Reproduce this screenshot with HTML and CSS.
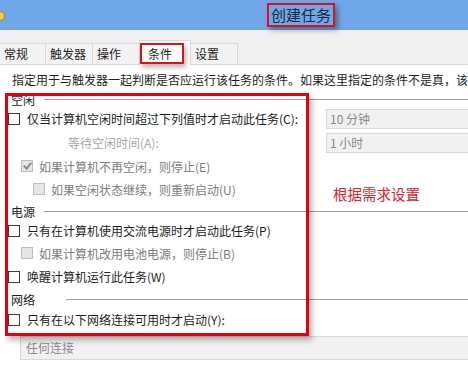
FILE: index.html
```html
<!DOCTYPE HTML>
<html lang="zh-CN">
<head>
	<meta charset="utf-8">
	<title>创建任务</title>
	<link rel="stylesheet" href="styles.css">
</head>
<body>
	<div class="titlebar">
		<svg class="app-icon" width="5" height="10" viewBox="0 0 5 10"><circle cx="0" cy="5" r="4.5" fill="#f2c94c" stroke="#b9892a" stroke-width="1"/></svg>
		<span class="title">创建任务</span>
	</div>
	<div class="tabs">
		<div class="tab tab-first">常规</div>
		<div class="tab tab-wide">触发器</div>
		<div class="tab">操作</div>
		<div class="tab tab-on"><span class="tab-mark">条件</span></div>
		<div class="tab">设置</div>
	</div>
	<div class="page">
		<p class="intro">指定用于与触发器一起判断是否应运行该任务的条件。如果这里指定的条件不是真，该</p>

		<div class="group-head"><span>空闲</span></div>
		<div class="row h21">
			<label class="check"><i class="box"></i>仅当计算机空闲时间超过下列值时才启动此任务(C):</label>
			<div class="select">10 分钟</div>
		</div>
		<div class="row h27">
			<span class="label-off indent-wait">等待空闲时间(A):</span>
			<div class="select">1 小时</div>
		</div>
		<div class="row h20 lvl1">
			<label class="check off"><i class="box box-checked"></i>如果计算机不再空闲，则停止(E)</label>
		</div>
		<div class="row h26 lvl2">
			<label class="check off"><i class="box"></i>如果空闲状态继续，则重新启动(U)</label>
		</div>

		<div class="group-head"><span>电源</span></div>
		<div class="row h21">
			<label class="check"><i class="box"></i>只有在计算机使用交流电源时才启动此任务(P)</label>
		</div>
		<div class="row h24 lvl1">
			<label class="check off"><i class="box"></i>如果计算机改用电池电源，则停止(B)</label>
		</div>
		<div class="row h23">
			<label class="check"><i class="box"></i>唤醒计算机运行此任务(W)</label>
		</div>

		<div class="group-head group-head-net"><span>网络</span></div>
		<div class="row h17">
			<label class="check"><i class="box"></i>只有在以下网络连接可用时才启动(Y):</label>
		</div>
		<div class="select select-wide">任何连接</div>
	</div>

	<div class="mark-area"></div>
	<div class="note">根据需求设置</div>
</body>
</html>
```

FILE: styles.css
```css
body {
	margin:0;
	width:468px;
	height:366px;
	overflow:hidden;
	position:relative;
	background:#fff;
	color:#1e1e1e;
	font-family:"Noto Sans CJK SC", "Microsoft YaHei", sans-serif;
	font-size:12px;
	}

/* Title bar */
.titlebar {
	height:30px;
	background:#6fa7e8;
	display:flex;
	align-items:center;
	}
	.app-icon {
		display:block;
		margin-top:2px;
		}
	.title {
		margin-left:262px;
		padding:0 2px 0 2px;
		height:20px;
		line-height:20px;
		border:2px solid #e0101a;
		font-size:15px;
		color:#1c2a3a;
		box-shadow:3px 3px 5px rgba(0,0,0,.35);
		}

/* Tabs */
.tabs {
	height:34px;
	background:#f0f0f0;
	border-bottom:1px solid #d9d9d9;
	display:flex;
	align-items:flex-end;
	}
	.tab {
		box-sizing:border-box;
		width:48px;
		height:21px;
		margin-right:-1px;
		padding-left:4px;
		line-height:20px;
		background:#f3f3f3;
		border:1px solid #d9d9d9;
		border-bottom:none;
		}
	.tab-first {
		width:47px;
		margin-left:-1px;
		}
	.tab-wide {
		width:48px;
		}
	.tab-on {
		position:relative;
		z-index:1;
		width:52px;
		height:25px;
		margin-bottom:-1px;
		padding-left:0;
		background:#fff;
		}
	.tab-mark {
		display:block;
		box-sizing:border-box;
		width:44px;
		height:21px;
		margin-top:2px;
		padding-left:6px;
		line-height:17px;
		border:2px solid #e0101a;
		box-shadow:2px 3px 5px rgba(0,0,0,.3);
		}

/* Page */
.page {
	padding-top:5px;
	}
	.intro {
		margin:0;
		padding-left:12px;
		height:20px;
		line-height:20px;
		white-space:nowrap;
		overflow:hidden;
		}

.group-head {
	display:flex;
	align-items:center;
	height:18px;
	padding-left:11px;
	}
	.group-head:after {
		content:'';
		flex:1;
		height:1px;
		margin-left:9px;
		background:#a0a0a0;
		}
	.group-head-net {
		height:23px;
		}
	.group-head-net:after {
		margin-left:31px;
		}

/* Rows */
.row {
	display:flex;
	align-items:center;
	padding-left:8px;
	white-space:nowrap;
	}
.h17 { height:17px; }
.h20 { height:20px; }
.h21 { height:21px; }
.h23 { height:23px; }
.h24 { height:24px; }
.h26 { height:26px; }
.h27 { height:27px; }
.lvl1 { padding-left:21px; }
.lvl2 { padding-left:33px; }

.check {
	display:flex;
	align-items:center;
	flex-shrink:0;
	width:318px;
	}
	.check.off {
		color:#7d7d7d;
		}
	.box {
		box-sizing:border-box;
		width:12px;
		height:12px;
		margin-right:7px;
		border:1px solid #3c3c3c;
		background:#fff;
		}
	.off .box {
		margin-right:6px;
		border-color:#bdbdbd;
		background:#e6e6e6;
		}
	.box-checked {
		position:relative;
		}
	.box-checked:after {
		content:'';
		position:absolute;
		left:3px;
		top:0;
		width:3px;
		height:6px;
		border:solid #8a8a8a;
		border-width:0 2px 2px 0;
		transform:rotate(40deg);
		}

.label-off {
	box-sizing:border-box;
	flex-shrink:0;
	width:318px;
	color:#a6a6a6;
	}
	.indent-wait {
		padding-left:60px;
		}

.select {
	box-sizing:border-box;
	width:142px;
	height:20px;
	padding-left:3px;
	line-height:18px;
	color:#8a8a8a;
	background:#f1f1f1;
	border:1px solid #d8d8d8;
	border-right:none;
	flex-shrink:0;
	}
.select-wide {
	width:448px;
	height:24px;
	line-height:22px;
	margin:8px 0 0 20px;
	padding-left:5px;
	}

/* Annotation */
.mark-area {
	position:absolute;
	left:5px;
	top:93px;
	width:298px;
	height:237px;
	border:3px solid #e4000f;
	box-shadow:3px 4px 6px rgba(0,0,0,.3);
	}
.note {
	position:absolute;
	left:333px;
	top:183px;
	font-size:14.5px;
	color:#e8202a;
	}
```
